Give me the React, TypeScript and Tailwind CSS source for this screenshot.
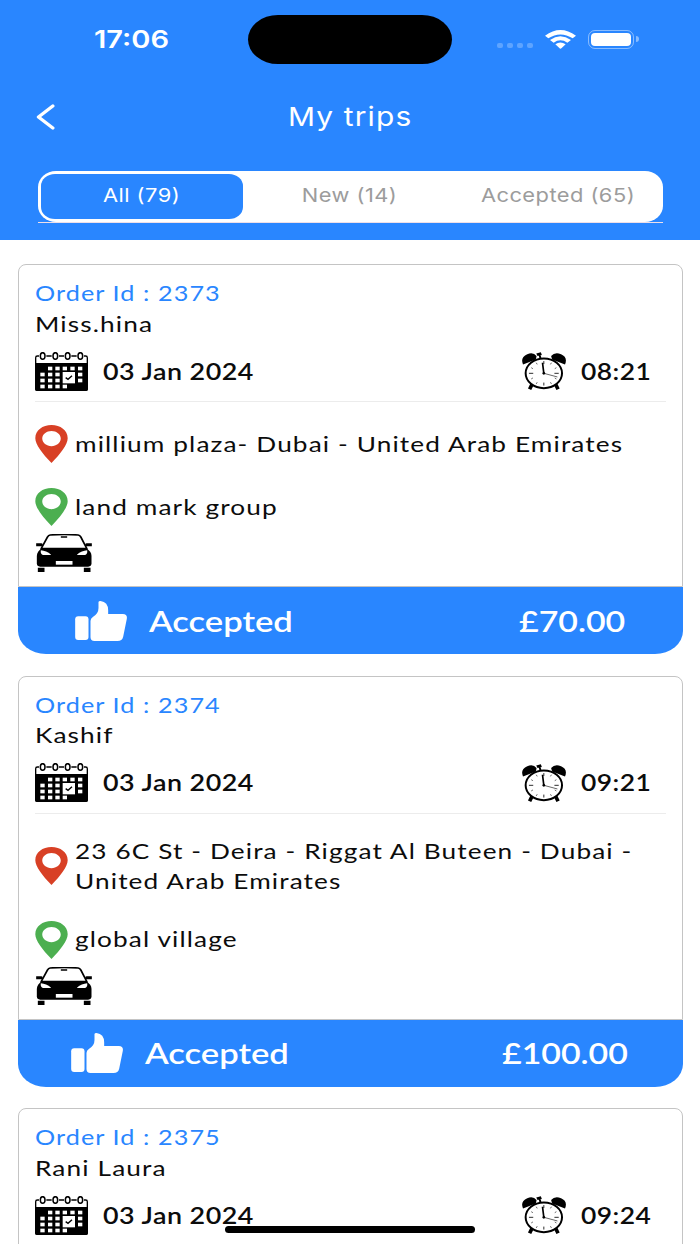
import type { ReactNode } from "react";
import clsx from "clsx";

interface Trip {
  id: number;
  customer: string;
  date: string;
  time: string;
  details?: {
    pickup: string[];
    dropoff: string;
    status: string;
    price: string;
    priceWidth: string;
  };
}

const trips: Trip[] = [
  {
    id: 2373,
    customer: "Miss.hina",
    date: "03 Jan 2024",
    time: "08:21",
    details: {
      pickup: ["millium plaza- Dubai - United Arab Emirates"],
      dropoff: "land mark group",
      status: "Accepted",
      price: "£70.00",
      priceWidth: "w-[107px]",
    },
  },
  {
    id: 2374,
    customer: "Kashif",
    date: "03 Jan 2024",
    time: "09:21",
    details: {
      pickup: ["23 6C St - Deira - Riggat Al Buteen - Dubai -", "United Arab Emirates"],
      dropoff: "global village",
      status: "Accepted",
      price: "£100.00",
      priceWidth: "w-[127px]",
    },
  },
  {
    id: 2375,
    customer: "Rani Laura",
    date: "03 Jan 2024",
    time: "09:24",
  },
];

const tabs = [
  { label: "All (79)", active: true },
  { label: "New (14)", active: false },
  { label: "Accepted (65)", active: false },
];

// Horizontally widened text
function Wide({ className, children }: { className?: string; children: ReactNode }) {
  return (
    <span className={clsx("block w-max origin-left whitespace-nowrap", className)}>{children}</span>
  );
}

function StatusBar() {
  return (
    <div className="flex h-[64px] items-start pt-[15px]">
      <div className="flex h-[49px] w-[248px] items-center pl-[94px]">
        <Wide className="scale-x-[1.21] font-['Inter',sans-serif] text-[24px] font-semibold">17:06</Wide>
      </div>
      <div className="h-[49px] w-[204px] rounded-[30px/24.5px] bg-black" />
      <div className="flex h-[49px] items-center pl-[45px]">
        <div className="mt-[12px] flex gap-[4px]">
          {[0, 1, 2, 3].map((i) => (
            <div key={i} className="h-[5px] w-[6px] rounded-[2px] bg-white/25" />
          ))}
        </div>
        <svg className="mb-[1px] ml-[12px] h-[19px] w-[31px]" viewBox="0 0 93 57" fill="#fff">
          <path d="M0 17 Q46 -17 93 17 L83 25 Q46 2 10 25 Z" />
          <path d="M15 30 Q46 8 78 30 L67 38 Q46 24 26 38 Z" />
          <path d="M31 43 Q46 32 62 43 L50 54 Q46 58 43 54 Z" />
        </svg>
        <div className="mb-[1px] ml-[12px] flex h-[19px] w-[46px] rounded-[7px] border border-white/45 p-[2px]">
          <div className="h-full w-full rounded-[4px] bg-white" />
        </div>
        <div className="mb-[1px] ml-[2px] h-[6px] w-[3px] rounded-r-full bg-white/45" />
      </div>
    </div>
  );
}

function Header() {
  return (
    <header className="h-[240px] bg-[#2986ff] text-white">
      <StatusBar />
      <div className="flex h-[107px] items-center pb-[2px] pl-[36px]">
        <svg className="h-[26px] w-[19px]" viewBox="0 0 19 26" fill="none" stroke="#fff" strokeWidth="3.4" strokeLinecap="round" strokeLinejoin="round">
          <path d="M16.8 2 L2.5 13 L16.8 24" />
        </svg>
        <Wide className="ml-[233px] scale-x-[1.15] font-['Inter',sans-serif] text-[26px] tracking-[1px]">My trips</Wide>
      </div>
      <div className="mx-[37.5px]">
        <div className="flex h-[51px] rounded-[18px/16px] bg-white p-[3px]">
          {tabs.map((tab) => (
            <div
              key={tab.label}
              className={clsx(
                "mr-[6px] flex flex-1 items-center justify-center rounded-[14px/12px] last:mr-0",
                tab.active ? "bg-[#2986ff] text-white" : "text-[#9c9c9c]",
              )}
            >
              <span className="block scale-x-[1.15] whitespace-nowrap pb-[1px] font-['Inter',sans-serif] text-[19px] tracking-[0.4px]">
                {tab.label}
              </span>
            </div>
          ))}
        </div>
        <div className="h-px bg-[#eedfe8]" />
      </div>
    </header>
  );
}

const calendarDays = [
  [39, 44], [61, 44], [83, 44], [106, 44], [129, 44],
  [16, 62], [39, 62], [61, 62], [129, 62],
  [16, 80], [39, 80], [61, 80], [129, 80],
  [16, 98], [39, 98], [61, 98], [83, 98],
];

function CalendarIcon() {
  return (
    <svg className="h-[39px] w-[53px] shrink-0" viewBox="0 0 159 117">
      <rect x="2" y="12" width="155" height="103" rx="5" fill="#fff" stroke="#000" strokeWidth="4" />
      <path d="M0 33 H159 V111 Q159 117 153 117 H6 Q0 117 0 111 Z" />
      {[23, 61, 98, 136].map((x) => (
        <g key={x}>
          <rect x={x - 11} y="8" width="22" height="8" fill="#fff" />
          <ellipse cx={x} cy="12" rx="7" ry="10" fill="#fff" stroke="#000" strokeWidth="4.5" />
        </g>
      ))}
      {calendarDays.map(([x, y]) => (
        <rect key={`${x}-${y}`} x={x} y={y} width="13" height="11" fill="#fff" />
      ))}
      <rect x="83" y="60" width="37" height="34" fill="#fff" />
      <path d="M92 77 L99 82 L111 71" fill="none" stroke="#000" strokeWidth="4" />
    </svg>
  );
}

function AlarmIcon() {
  return (
    <svg className="h-[38px] w-[44px] shrink-0" viewBox="0 0 133 114">
      <path d="M3 37 Q-6 15 16 6 Q34 -2 44 12 L42 22 Z" />
      <path d="M130 37 Q139 15 118 6 Q99 -2 88 12 L91 22 Z" />
      <path d="M43 4 L57 0 L60 9 L47 12 Z M50 8 L56 8 L59 19 L53 19 Z" />
      <path d="M31 96 L23 112 M101 96 L109 112" stroke="#000" strokeWidth="11" />
      <ellipse cx="66" cy="64" rx="55" ry="45" fill="#fff" stroke="#000" strokeWidth="6" />
      <g stroke="#000" strokeWidth="2.5">
        <path d="M66 27 V36 M66 92 V101 M21 64 H34 M98 64 H111" />
        <path d="M43 32 L46 37 M89 32 L86 37 M28 47 L33 50 M104 47 L99 50 M28 81 L33 78 M104 81 L99 78 M43 96 L46 91 M89 96 L86 91" strokeWidth="1.8" />
        <path d="M66 64 L107 75" strokeWidth="1.8" />
        <path d="M66 64 L62 32" strokeWidth="5" />
      </g>
      <circle cx="66" cy="64" r="4" />
    </svg>
  );
}

function PinIcon({ color }: { color: string }) {
  return (
    <svg className="h-[38px] w-[33px] shrink-0" viewBox="0 0 98 115" fill={color}>
      <path
        fillRule="evenodd"
        d="M49 0 C76 0 98 16 98 40 C98 59 76 87 49 115 C22 87 0 59 0 40 C0 16 22 0 49 0 Z M49 18 C34 18 21 28 21 41 C21 54 34 64 49 64 C64 64 77 54 77 41 C77 28 64 18 49 18 Z"
      />
    </svg>
  );
}

function CarIcon() {
  return (
    <svg className="h-[38px] w-[56px]" viewBox="0 0 167 114">
      <path d="M42 3 Q84 0 126 3 Q131 4 134 9 L152 44 H15 L34 9 Q37 4 42 3 Z" strokeLinejoin="round" stroke="#000" strokeWidth="5" fill="#fff" />
      <path d="M0 28 H16 Q20 28 20 33 V37 H0 Z M167 28 H151 Q147 28 147 33 V37 H167 Z" />
      <path d="M16 42 H151 L162 53 Q166 58 166 66 V88 Q166 98 156 98 H12 Q2 98 2 88 V66 Q2 58 6 53 Z" />
      <path d="M14 49 Q30 50 45 62 L42 63 H20 Q12 60 14 49 Z M153 49 Q137 50 122 62 L125 63 H147 Q155 60 153 49 Z" fill="#fff" />
      <rect x="59" y="81" width="50" height="11" fill="#fff" />
      <path d="M74 7 H93 V11 H74 Z M5 101 H25 V114 H5 Z M143 101 H163 V114 H143 Z" />
    </svg>
  );
}

function ThumbIcon() {
  return (
    <svg className="h-[40px] w-[52px] shrink-0" viewBox="0 0 155 120" fill="#fff">
      <rect x="0" y="46" width="40" height="71" rx="9" />
      <path d="M70 3 Q70 0 76 0 Q99 3 99 28 V39 H143 Q157 39 155 53 L144 107 Q141 120 127 120 H58 Q46 120 46 109 V60 Q46 52 53 48 Q70 38 70 21 Z" />
    </svg>
  );
}

function Place({ color, lines }: { color: string; lines: string[] }) {
  return (
    <div className="flex min-h-[38px] items-center">
      <PinIcon color={color} />
      <div className="my-[-5px] ml-[7px] py-[4px]">
        {lines.map((line) => (
          <Wide key={line} className="scale-x-[1.247] text-[21px] leading-[30.5px] tracking-[0.9px]">{line}</Wide>
        ))}
      </div>
    </div>
  );
}

function TripCard({ trip }: { trip: Trip }) {
  const { details } = trip;

  return (
    <article>
      <div className="min-h-[160px] rounded-t-[8px] border border-[#c4c4c4] px-[16px] pt-[13px] pb-[14px]">
        <Wide className="scale-x-[1.2] text-[21px] leading-[30.5px] tracking-[0.9px] text-[#2986ff]">
          Order Id : {trip.id}
        </Wide>
        <Wide className="scale-x-[1.25] text-[21px] leading-[30.5px] tracking-[0.9px]">{trip.customer}</Wide>
        <div className="mt-[10px] flex h-[44px] items-center">
          <CalendarIcon />
          <Wide className="ml-[15px] scale-x-[1.22] text-[22px] font-semibold tracking-[0.4px]">{trip.date}</Wide>
          <div className="ml-auto flex w-[144px] items-center">
            <AlarmIcon />
            <Wide className="ml-[15px] scale-x-[1.2] text-[22px] font-semibold tracking-[0.4px]">{trip.time}</Wide>
          </div>
        </div>
        <div className="mt-[8px] h-px bg-[#ececec]" />
        {details && (
          <>
            <div className="mt-[23px] flex flex-col gap-[25px]">
              <Place color="#d84025" lines={details.pickup} />
              <Place color="#4caf50" lines={[details.dropoff]} />
            </div>
            <div className="mt-[8px] ml-[1px]">
              <CarIcon />
            </div>
          </>
        )}
      </div>
      {details && (
        <div className="flex h-[67px] items-center bg-[#2986ff] text-white [border-radius:0_0_28px_28px/0_0_23px_23px]">
          <div className="flex-1" />
          <div className="flex w-[216px] items-center">
            <ThumbIcon />
            <Wide className="ml-[22px] scale-x-[1.235] text-[28px] font-semibold">{details.status}</Wide>
          </div>
          <div className="flex-[4]" />
          <div className={details.priceWidth}>
            <Wide className="scale-x-[1.21] text-[28px] font-semibold">{details.price}</Wide>
          </div>
          <div className="flex-1" />
        </div>
      )}
    </article>
  );
}

export default function App() {
  return (
    <div className="relative h-[1244px] w-[700px] overflow-hidden bg-white font-['Lato',sans-serif] text-[#0c0c0c]">
      <Header />
      <main className="flex flex-col gap-[21.5px] px-[17.5px] pt-[24px]">
        {trips.map((trip) => (
          <TripCard key={trip.id} trip={trip} />
        ))}
      </main>
      {/* Home indicator */}
      <div className="absolute bottom-[11px] left-[225px] h-[7px] w-[250px] rounded-full bg-black" />
    </div>
  );
}
